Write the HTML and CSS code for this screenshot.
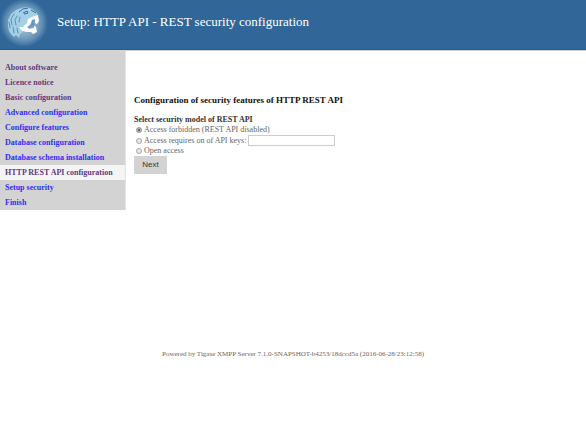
FILE: index.html
```html
<!DOCTYPE html>
<html lang="en">
<head>
<meta charset="utf-8">
<title>Setup: HTTP API - REST security configuration</title>
<link rel="stylesheet" href="styles.css">
</head>
<body>
<header class="header">
  <svg class="logo" viewBox="0 0 50 49" aria-hidden="true">
    <defs>
      <radialGradient id="glow">
        <stop offset="0" stop-color="#a8c2d9"/>
        <stop offset=".5" stop-color="#85a9c7"/>
        <stop offset=".75" stop-color="#6390b7"/>
        <stop offset="1" stop-color="#306798"/>
      </radialGradient>
    </defs>
    <circle cx="24" cy="23" r="24" fill="url(#glow)"/>
    <path fill="#a3d0e6" d="M8 20 L11 14 L16 10 L21 8 L27 7 L32 9 L37 13 L38 16 L34 17 L31 21 L28 25 L24 27 L23 32 L20 34 L19 38 L16 35 L14 37 L11 34 L9 31 L8 26 Z"/>
    <path fill="#6998bd" d="M32 19 L35 19 L34 26 L30 28 L27 27 L31 24 Z"/>
    <path fill="#fff" d="M28 19 L32 17 L38 15 L39 21 L37 24 L35 23 L35 19 L32 20 L30 25 L27 27 L29 29 L34 28 L34 26 L36 27 L37 32 L33 34 L31 32 L26 32 L21 30 L19 27 L23 27 L27 23 Z"/>
    <g fill="none" stroke="#5b91b6" stroke-width="1" stroke-linecap="round">
      <path d="M14 14 L11 19 L12 25 M17 16 L15 20 L16 25 M9 22 L10 28 M13 27 L14 33 M17 28 L18 33 M20 17 L19 22"/>
    </g>
    <path fill="none" stroke="#326d9c" d="M19 12 Q22 8 28 8 M23 13 L27 11 L28 13 L24 14 M31 10 L36 13"/>
  </svg>
  <h1 class="title">Setup: HTTP API - REST security configuration</h1>
</header>
<div class="layout">
  <nav class="menu">
    <a class="item visited" href="#about">About software</a>
    <a class="item visited" href="#licence">Licence notice</a>
    <a class="item visited" href="#basic">Basic configuration</a>
    <a class="item" href="#advanced">Advanced configuration</a>
    <a class="item" href="#features">Configure features</a>
    <a class="item" href="#database">Database configuration</a>
    <a class="item" href="#schema">Database schema installation</a>
    <a class="item visited current" href="#rest" aria-current="page">HTTP REST API configuration</a>
    <a class="item" href="#security">Setup security</a>
    <a class="item" href="#finish">Finish</a>
  </nav>
  <main class="content">
    <h2 class="heading">Configuration of security features of HTTP REST API</h2>
    <form class="form">
      <fieldset class="options">
        <legend class="legend">Select security model of REST API</legend>
        <div class="option">
          <input class="radio" type="radio" name="model" id="forbidden" checked>
          <label for="forbidden">Access forbidden (REST API disabled)</label>
        </div>
        <div class="option">
          <input class="radio" type="radio" name="model" id="keys">
          <label for="keys">Access requires on of API keys:</label>
          <input class="keys" type="text" aria-label="API keys">
        </div>
        <div class="option">
          <input class="radio" type="radio" name="model" id="open">
          <label for="open">Open access</label>
        </div>
      </fieldset>
      <button class="next" type="button">Next</button>
    </form>
  </main>
</div>
<footer class="footer">Powered by Tigase XMPP Server 7.1.0-SNAPSHOT-b4253/18dccd5a (2016-06-28/23:12:58)</footer>
</body>
</html>
```
FILE: styles.css
```css
* {
  box-sizing: border-box;
}

body {
  margin: 0;
  background: #fff;
  color: #666;
  font: 8px/10px "Liberation Serif", "Times New Roman", serif;
}

.header {
  display: flex;
  align-items: center;
  gap: 7px;
  height: 50px;
  background: #306798;
  border-bottom: 1px solid #285a8b;
}

.logo {
  width: 50px;
  height: 49px;
}

.title {
  margin: 0 0 6px;
  color: #fff;
  font-size: 13px;
  line-height: 16px;
  font-weight: 400;
}

.layout {
  display: flex;
  align-items: flex-start;
  gap: 8px;
  border-top: 1px solid #d3d3d3;
}

.menu {
  flex: 0 0 126px;
  padding-top: 9px;
  background: #d3d3d3;
  border-right: 1px solid #e4e4e4;
}

.item {
  display: block;
  padding-left: 5px;
  color: #2f2ff5;
  font-weight: 700;
  line-height: 15px;
  text-decoration: none;
}

.visited {
  color: #61397f;
}

.current {
  background: #f5f5f5;
}

.content {
  flex: 1;
  padding-top: 43px;
}

.heading {
  margin: 0 0 9px;
  color: #111;
  font-size: 9px;
  line-height: 12px;
}

.options {
  margin: 0;
  padding: 0;
  border: 0;
}

.legend {
  padding: 0;
  color: #333;
  font-weight: 700;
}

.option {
  display: flex;
  align-items: center;
  gap: 2px;
  min-height: 10px;
  padding-left: 2px;
}

.radio {
  appearance: none;
  width: 6px;
  height: 6px;
  margin: 0;
  border: 1px solid #aaa;
  border-radius: 50%;
  background: #e8e8e8;
}

.radio:checked {
  background: #444;
  box-shadow: inset 0 0 0 1px #ccc;
}

.keys {
  width: 87px;
  height: 11px;
  margin: 0;
  padding: 0 2px;
  border: 1px solid #ccc;
  font: inherit;
}

.next {
  width: 33px;
  height: 18px;
  padding: 0;
  border: 0;
  background: #d3d3d3;
  color: #333;
  font: 8px/10px "Liberation Sans", Arial, sans-serif;
}

.footer {
  margin-top: 139px;
  text-align: center;
  font-size: 7px;
}
```
